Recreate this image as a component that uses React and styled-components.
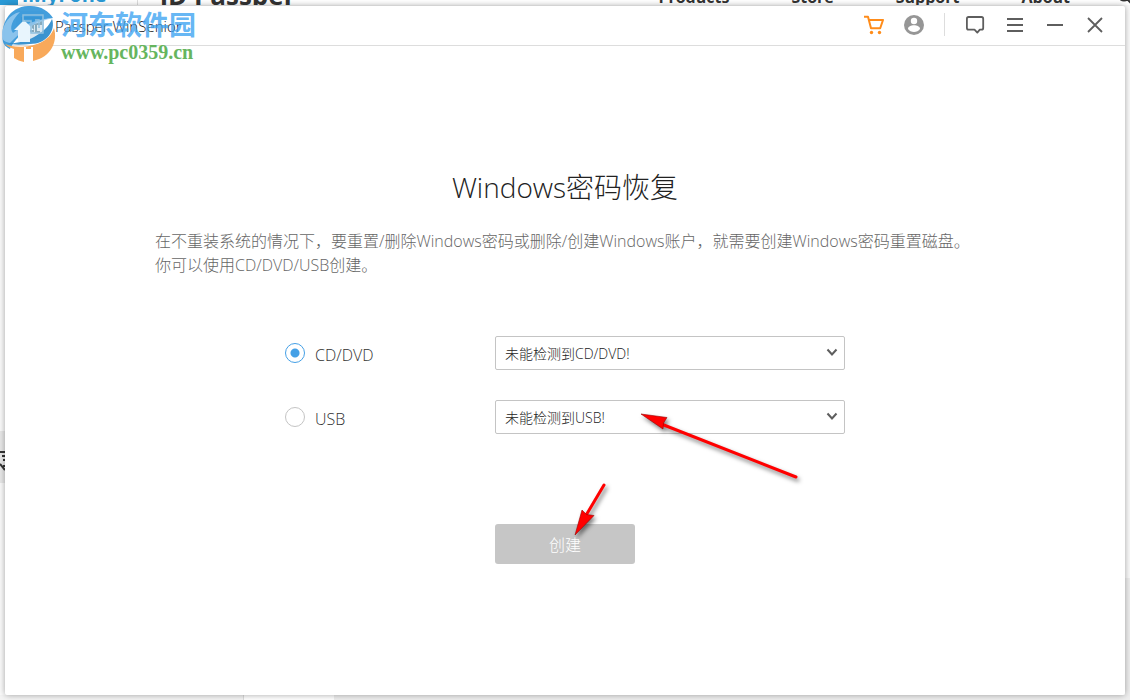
import React, { useState } from "react";
import styled, { createGlobalStyle } from "styled-components";

const GlobalStyle = createGlobalStyle`
  *, *::before, *::after { box-sizing: border-box; }
  body {
    margin: 0;
    background: #fafafa;
    font-family: "Open Sans", "Noto Sans CJK SC", sans-serif;
    font-weight: 300;
    color: #333;
  }
`;

const Page = styled.div`
  position: relative;
  display: flex;
  min-height: 100vh;
  padding: 6px 5px 5px;
  overflow: hidden;
`;

const SiteHeader = styled.div`
  position: absolute;
  top: 0;
  left: 0;
  right: 0;
  height: 5px;
  display: flex;
  align-items: flex-end;
  overflow: hidden;
  background: #fff;
  font-family: "Open Sans", sans-serif;
  font-weight: 700;
  white-space: nowrap;
  color: #333;
`;

const SiteLogo = styled.span`
  width: 18px;
  height: 12px;
  background: #2a9ad6;
`;

const SiteBrand = styled.span`
  width: 120px;
  padding-left: 4px;
  border-right: 1px solid #ddd;
  font-size: 20px;
  line-height: 20px;
  color: #2a9ad6;
`;

const SiteProduct = styled.span`
  padding-left: 22px;
  font-size: 26px;
  line-height: 20px;
`;

const SiteNav = styled.nav`
  display: flex;
  gap: 62px;
  margin-left: auto;
  padding-right: 50px;
  font-size: 16px;
  line-height: 16px;
`;

const SiteSearch = styled.svg`
  width: 10px;
  height: 5px;
`;

const SiteBand = styled.div`
  position: absolute;
  left: 0;
  top: 431px;
  width: 5px;
  height: 52px;
  overflow: hidden;
  background: #e8e8e8;
`;

const SiteColumn = styled.div`
  position: absolute;
  right: 0;
  top: 578px;
  bottom: 0;
  width: 5px;
  background: #eee;
`;

const SiteFooter = styled.div`
  position: absolute;
  left: 0;
  right: 0;
  bottom: 0;
  height: 5px;
  display: flex;
`;

const FooterCell = styled.span`
  flex: ${(p) => p.$grow || "none"};
  width: ${(p) => p.$width || "auto"};
  background: ${(p) => p.$tone};
`;

const Window = styled.main`
  position: relative;
  flex: 1;
  display: flex;
  flex-direction: column;
  background: #fff;
  border-radius: 2px;
  box-shadow: 0 0 6px rgba(0, 0, 0, 0.35);
`;

const TitleBar = styled.header`
  display: flex;
  align-items: center;
  height: 40px;
  padding: 0 20px 2px 11px;
  border-bottom: 1px solid #ddd;
`;

const AppIcon = styled.svg`
  width: 28px;
  height: 28px;
  margin-right: 11px;
`;

const AppName = styled.span`
  font-size: 15px;
  line-height: 20px;
  padding-top: 2px;
  color: #111;
`;

const Tools = styled.div`
  display: flex;
  align-items: center;
  gap: 20px;
  margin-left: auto;
`;

const ToolButton = styled.button`
  display: flex;
  width: 20px;
  height: 20px;
  padding: 0;
  border: 0;
  background: none;
  color: ${(p) => p.$color || "#5e5e5e"};

  svg { width: 20px; height: 20px; }
`;

const Divider = styled.span`
  width: 1px;
  height: 23px;
  background: #ddd;
`;

const Content = styled.section`
  display: flex;
  flex-direction: column;
  align-items: center;
  padding-top: 121px;
`;

const Title = styled.h1`
  margin: 0;
  font-size: 28px;
  font-weight: 300;
  line-height: 40px;
  color: #222;
`;

const Description = styled.p`
  width: 100%;
  max-width: 820px;
  margin: 22px 0 59px;
  font-size: 16px;
  line-height: 24px;
  color: #666;
`;

const Form = styled.form`
  position: relative;
  display: flex;
  flex-direction: column;
  gap: 30px;
  width: 100%;
  max-width: 560px;
`;

const Row = styled.div`
  display: grid;
  grid-template-columns: 210px 1fr;
  align-items: center;
`;

const Option = styled.label`
  display: flex;
  align-items: center;
  gap: 10px;
  font-size: 16px;
  line-height: 20px;
`;

const OptionText = styled.span`
  padding-top: 2px;
  margin-bottom: -2px;
`;

const Radio = styled.input`
  appearance: none;
  width: 20px;
  height: 20px;
  margin: 0;
  border: 1px solid #c4c4c4;
  border-radius: 50%;

  &:checked {
    border-color: #45a0e6;
    background: radial-gradient(circle, #45a0e6 4px, transparent 5px);
  }
`;

const SelectBox = styled.div`
  position: relative;
`;

const Select = styled.select`
  appearance: none;
  display: block;
  width: 100%;
  height: 34px;
  padding: 0 30px 0 9px;
  border: 1px solid #c4c4c4;
  border-radius: 2px;
  background: #fff;
  font: inherit;
  font-size: 14px;
  color: #222;
`;

const Chevron = styled.svg`
  position: absolute;
  right: 7px;
  top: 12px;
  width: 12px;
  height: 10px;
  pointer-events: none;
`;

const Submit = styled.button`
  align-self: center;
  width: 140px;
  height: 40px;
  margin-top: 60px;
  padding: 0;
  border: 0;
  border-radius: 3px;
  background: #c6c6c6;
  font: inherit;
  font-size: 16px;
  color: #fff;
`;

const Arrows = styled.svg`
  position: absolute;
  left: 280px;
  top: 70px;
  width: 250px;
  height: 140px;
  pointer-events: none;
  filter: drop-shadow(2px 3px 2px rgba(0, 0, 0, 0.5));
`;

const Watermark = styled.div`
  position: absolute;
  left: 0;
  top: 0;
  display: flex;
  gap: 1px;
  pointer-events: none;
`;

const WatermarkLogo = styled.svg`
  width: 60px;
  height: 66px;
`;

const WatermarkText = styled.div`
  padding-top: 8px;
  font-weight: 700;
  white-space: nowrap;
`;

const WatermarkName = styled.div`
  font-family: "Noto Sans CJK SC", sans-serif;
  font-size: 27px;
  line-height: 32px;
  color: rgba(61, 163, 242, 0.8);
`;

const WatermarkUrl = styled.div`
  font-family: "Liberation Serif", serif;
  font-size: 20px;
  line-height: 24px;
  color: #66b55e;
`;

function DeviceRow({ id, label, message, checked, onSelect }) {
  return (
    <Row>
      <Option htmlFor={id}>
        <Radio id={id} type="radio" name="media" checked={checked} onChange={onSelect} />
        <OptionText>{label}</OptionText>
      </Option>
      <SelectBox>
        <Select aria-label={label}>
          <option>{message}</option>
        </Select>
        <Chevron viewBox="0 0 12 10" fill="none" stroke="#5e5e5e" strokeWidth="2">
          <path d="M1.500 1.500 6 6.500l4.500-5" />
        </Chevron>
      </SelectBox>
    </Row>
  );
}

export default function App() {
  const [media, setMedia] = useState("cd");
  return (
    <Page>
      <GlobalStyle />
      <SiteHeader aria-hidden="true">
        <SiteLogo />
        <SiteBrand>iMyFone</SiteBrand>
        <SiteProduct>iD Passper</SiteProduct>
        <SiteNav>
          <span>Products</span>
          <span>Store</span>
          <span>Support</span>
          <span>About</span>
        </SiteNav>
        <SiteSearch viewBox="0 0 10 5" fill="none" stroke="#333" strokeWidth="2">
          <path d="M0-1q4 3 8 0M7-1l4 4" />
        </SiteSearch>
      </SiteHeader>
      <SiteBand>
        <svg width="5" height="52" fill="none" stroke="#333" strokeWidth="2">
          <path d="M0 21h5M2 25h3M3 29h2M0 33l5 6M3 35h2" />
        </svg>
      </SiteBand>
      <SiteColumn />
      <SiteFooter>
        <FooterCell $width="243px" $tone="#f4f4f4" />
        <FooterCell $width="1px" $tone="#ddd" />
        <FooterCell $width="90px" $tone="#fff" />
        <FooterCell $grow="1" $tone="#eee" />
      </SiteFooter>

      <Window>
        <TitleBar>
          <AppIcon viewBox="0 0 28 28">
            <rect width="28" height="28" rx="3" fill="#d9e8f1" />
            <path d="M6 7h11v13H6zM18 7h7v6h-7zM20 13v8h4" fill="none" stroke="#86aabd" strokeWidth="2" />
          </AppIcon>
          <AppName>Passper WinSenior</AppName>
          <Tools>
            <ToolButton aria-label="Store" $color="#ff8c1a">
              <svg viewBox="0 0 20 20" fill="none" stroke="currentColor" strokeWidth="2">
                <path d="M0 1.800h4l3 11.400h9.200L19 5H5" strokeLinejoin="round" />
                <circle cx="7.500" cy="17.500" r="1.700" fill="currentColor" stroke="none" />
                <circle cx="15.500" cy="17.500" r="1.700" fill="currentColor" stroke="none" />
              </svg>
            </ToolButton>
            <ToolButton aria-label="Account" $color="#969696">
              <svg viewBox="0 0 20 20">
                <circle cx="10" cy="10" r="10" fill="currentColor" />
                <circle cx="10" cy="6" r="3.200" fill="#fff" />
                <path d="M4 14c0-5 12-5 12 0-2.500 4-9.500 4-12 0z" fill="#fff" />
              </svg>
            </ToolButton>
            <Divider />
            <ToolButton aria-label="Feedback">
              <svg viewBox="0 0 20 20" fill="none" stroke="currentColor" strokeWidth="1.800" strokeLinejoin="round">
                <path d="M3.500 2h13Q18.200 2 18.200 3.700V13q0 1.700-1.700 1.700h-1.700L12.300 17.600 9.500 14.700h-6Q1.900 14.700 1.900 13V3.700Q1.900 2 3.500 2z" />
              </svg>
            </ToolButton>
            <ToolButton aria-label="Menu">
              <svg viewBox="0 0 20 20" fill="none" stroke="currentColor" strokeWidth="2">
                <path d="M2 4h16M2 10h16M2 16h16" />
              </svg>
            </ToolButton>
            <ToolButton aria-label="Minimize">
              <svg viewBox="0 0 20 20" fill="none" stroke="currentColor" strokeWidth="2">
                <path d="M2 10h16" />
              </svg>
            </ToolButton>
            <ToolButton aria-label="Close">
              <svg viewBox="0 0 20 20" fill="none" stroke="currentColor" strokeWidth="1.800">
                <path d="M3 3l14 14M17 3 3 17" />
              </svg>
            </ToolButton>
          </Tools>
        </TitleBar>

        <Content>
          <Title>Windows密码恢复</Title>
          <Description>
            在不重装系统的情况下，要重置/删除Windows密码或删除/创建Windows账户，就需要创建Windows密码重置磁盘。
            <br />
            你可以使用CD/DVD/USB创建。
          </Description>
          <Form onSubmit={(e) => e.preventDefault()}>
            <DeviceRow
              id="media-cd"
              label="CD/DVD"
              message="未能检测到CD/DVD!"
              checked={media === "cd"}
              onSelect={() => setMedia("cd")}
            />
            <DeviceRow
              id="media-usb"
              label="USB"
              message="未能检测到USB!"
              checked={media === "usb"}
              onSelect={() => setMedia("usb")}
            />
            <Submit type="submit">创建</Submit>
            <Arrows viewBox="0 0 250 140" fill="#f00" stroke="#f00">
              <path d="M95 17.500 231 71" strokeWidth="3" strokeLinecap="round" />
              <path d="M76 8l26 3.500-3.500 5.500-.5 6z" stroke="#900" strokeWidth=".6" />
              <path d="M39 79 20 111" strokeWidth="3" strokeLinecap="round" />
              <path d="M10 129l7-25 4.500 4.500 7.500 1z" stroke="#900" strokeWidth=".6" />
            </Arrows>
          </Form>
        </Content>
      </Window>

      <Watermark>
        <WatermarkLogo viewBox="0 0 60 66">
          <path d="M3 42C0 24 9 7 28 6c12-1 21 5 25 12-14 1-26 8-34 18-5 6-8 10-9 13-4-2-6-4-7-7z" fill="#2f94d8" fillOpacity=".9" />
          <path d="M7 43C20 45 45 36 52 19c4 11-5 25-22 25-10 1-18 1-23-1z" fill="#2788cb" fillOpacity=".9" />
          <path d="M2 36C2 24 10 14 20 12 12 20 9 28 13 33c11-9 25-14 40-15-18 4-32 13-43 25-5-1-8-3-8-7z" fill="#9cccf0" fillOpacity=".8" />
          <path d="M14 30 24 20l10 10h-4v12H18V30z" fill="#e8f5fd" />
          <path d="M23 15h20v18H31V21h-8zM35 20h4v8" fill="none" stroke="#8fc0df" strokeWidth="1.500" />
          <path d="M5 44c10 5 42 5 49-16 4 14-3 29-21 33V49h-9v13c-4-1-7-2-10-4V49c-4-1-7-3-9-5z" fill="#f8a95b" />
          <path d="M24 47h2v14h-2zM31 47h2v13h-2z" fill="#fff" />
        </WatermarkLogo>
        <WatermarkText>
          <WatermarkName>河东软件园</WatermarkName>
          <WatermarkUrl>www.pc0359.cn</WatermarkUrl>
        </WatermarkText>
      </Watermark>
    </Page>
  );
}
